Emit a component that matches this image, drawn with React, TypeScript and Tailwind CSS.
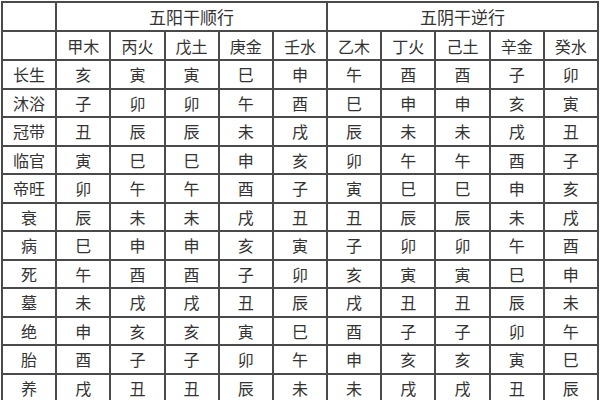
import React from 'react'

const yang = ['甲木', '丙火', '戊土', '庚金', '壬水']
const yin = ['乙木', '丁火', '己土', '辛金', '癸水']

const rows: [string, string[]][] = [
    ['长生', ['亥', '寅', '寅', '巳', '申', '午', '酉', '酉', '子', '卯']],
    ['沐浴', ['子', '卯', '卯', '午', '酉', '巳', '申', '申', '亥', '寅']],
    ['冠带', ['丑', '辰', '辰', '未', '戌', '辰', '未', '未', '戌', '丑']],
    ['临官', ['寅', '巳', '巳', '申', '亥', '卯', '午', '午', '酉', '子']],
    ['帝旺', ['卯', '午', '午', '酉', '子', '寅', '巳', '巳', '申', '亥']],
    ['衰', ['辰', '未', '未', '戌', '丑', '丑', '辰', '辰', '未', '戌']],
    ['病', ['巳', '申', '申', '亥', '寅', '子', '卯', '卯', '午', '酉']],
    ['死', ['午', '酉', '酉', '子', '卯', '亥', '寅', '寅', '巳', '申']],
    ['墓', ['未', '戌', '戌', '丑', '辰', '戌', '丑', '丑', '辰', '未']],
    ['绝', ['申', '亥', '亥', '寅', '巳', '酉', '子', '子', '卯', '午']],
    ['胎', ['酉', '子', '子', '卯', '午', '申', '亥', '亥', '寅', '巳']],
    ['养', ['戌', '丑', '丑', '辰', '未', '未', '戌', '戌', '丑', '辰']],
]

const cell = 'border-2 border-[#4a4a4a] text-center p-0 font-normal'

const App = () => {
    return (
        <div className="w-[600px] h-[400px] overflow-hidden bg-white pl-px pt-px text-[#333] font-['Noto_Sans_CJK_SC',sans-serif] text-[16px] leading-none">
            <table className="w-[598px] table-fixed border-collapse">
                <thead>
                    {/* 阴阳分组 */}
                    <tr className="h-[29px]">
                        <th className={cell}></th>
                        <th className={cell + ' text-[17px]'} colSpan={5}>五阳干顺行</th>
                        <th className={cell + ' text-[17px]'} colSpan={5}>五阴干逆行</th>
                    </tr>
                    {/* 天干 */}
                    <tr className="h-[29px]">
                        <th className={cell}></th>
                        {[...yang, ...yin].map((g) => (
                            <th key={g} className={cell}>{g}</th>
                        ))}
                    </tr>
                </thead>
                <tbody>
                    {rows.map(([name, vals]) => (
                        <tr key={name} className="h-[28.5px]">
                            <td className={cell}>{name}</td>
                            {vals.map((v, i) => (
                                <td key={i} className={cell}>{v}</td>
                            ))}
                        </tr>
                    ))}
                </tbody>
            </table>
        </div>
    )
}

export default App
